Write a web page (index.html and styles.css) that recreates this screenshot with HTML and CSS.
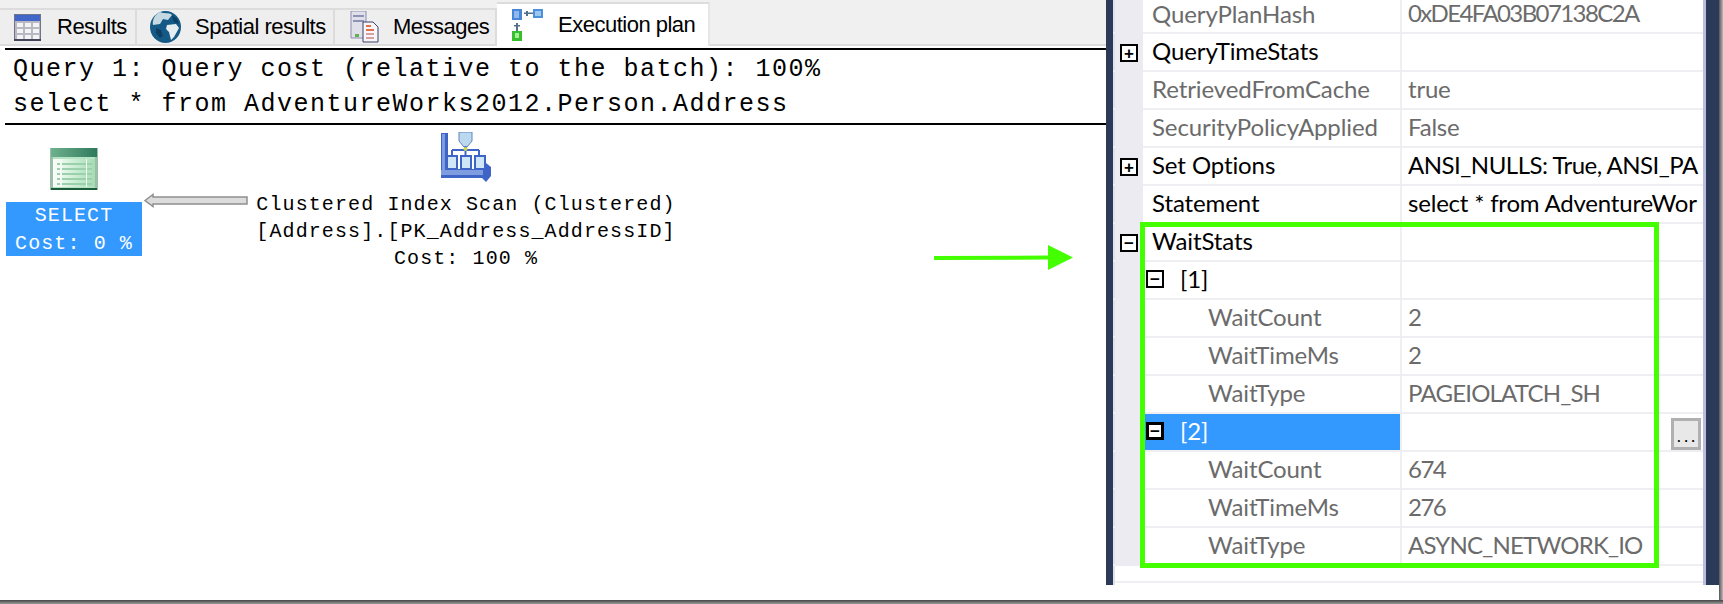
FILE: index.html
```html
<!DOCTYPE html>
<html lang="en">
<head>
    <meta charset="UTF-8">
    <title>Execution plan</title>
    <link rel="stylesheet" href="styles.css">
</head>
<body>
<div class="window">
    <div class="plan-pane">
        <div class="tabs">
            <div class="tab tab-results">
                <svg class="tab-icon" width="27" height="27" viewBox="0 0 27 27">
                    <rect x="0.5" y="0.5" width="26" height="26" fill="#b9b9c4" stroke="#6f7488"/>
                    <rect x="1" y="1" width="25" height="6" fill="#3f66c8"/>
                    <path d="M3 9h6v4H3zM11 9h6v4h-6zM19 9h6v4h-6zM3 15h6v4H3zM11 15h6v4h-6zM19 15h6v4h-6zM3 21h6v4H3zM11 21h6v4h-6zM19 21h6v4h-6z" fill="#f4f4f6"/>
                    <rect x="0" y="25" width="27" height="2" fill="#44465a"/>
                </svg>
                <span>Results</span>
            </div>
            <div class="tab tab-spatial">
                <svg class="tab-icon" width="31" height="32" viewBox="0 0 31 32">
                    <ellipse cx="15.5" cy="16" rx="15.5" ry="16" fill="#155a86"/>
                    <path d="M10 1c4 2 9 0 12 3l-4 5-5-1-3 5-7 1C2 9 5 3 10 1z" fill="#c4d9e2"/>
                    <path d="M17 14l9-1 3 4-5 9-3 3-2-8-3-3z" fill="#e6edf0"/>
                    <path d="M6 17l5 2 2 6-3 2-4-5z" fill="#0d3f63"/>
                    <path d="M22 4l5 4 2 5-5-2z" fill="#0d3f63"/>
                </svg>
                <span>Spatial results</span>
            </div>
            <div class="tab tab-messages">
                <svg class="tab-icon" width="29" height="32" viewBox="0 0 29 32">
                    <path d="M1 0h15v27H1z" fill="#dfe0ea" stroke="#8a8db0"/>
                    <rect x="3" y="4" width="11" height="2" fill="#8e92b4"/>
                    <rect x="3" y="9" width="11" height="2" fill="#8e92b4"/>
                    <rect x="5" y="23" width="4" height="3" fill="#62b04c"/>
                    <path d="M13 11h10l5 5v15H13z" fill="#f6f6fa" stroke="#3a4066"/>
                    <path d="M16 14h5v2h-5zM16 18h8v2h-8z" fill="#e2714a"/>
                    <path d="M16 22h8v2h-8zM16 26h8v2h-8z" fill="#d9a0a0"/>
                </svg>
                <span>Messages</span>
            </div>
            <div class="tab tab-active">
                <svg class="tab-icon" width="31" height="32" viewBox="0 0 31 32">
                    <rect x="0" y="0" width="10" height="11" fill="#4a86d8"/>
                    <rect x="2" y="2" width="5" height="7" fill="#8fb8ec"/>
                    <rect x="21" y="0" width="10" height="9" fill="#4a90dc"/>
                    <rect x="23" y="2" width="6" height="5" fill="#9cc6ee"/>
                    <path d="M12 3.500h9v1.500h-9zM14 2h2v5h-2z" fill="#55708a"/>
                    <path d="M4 14h2v8H4zM2 16h6v1.500H2z" fill="#55708a"/>
                    <rect x="0" y="22" width="10" height="10" fill="#35c02c"/>
                    <rect x="3" y="24" width="4" height="5" fill="#a6ef98"/>
                </svg>
                <span>Execution plan</span>
            </div>
            <div class="tab-rest"></div>
        </div>
        <div class="query-text">
            <div>Query 1: Query cost (relative to the batch): 100%</div>
            <div>select * from AdventureWorks2012.Person.Address</div>
        </div>
        <div class="plan">
            <div class="node node-select">
                <svg width="48" height="42" viewBox="0 0 48 42">
                    <defs>
                        <linearGradient id="sheet" x1="0" x2="1" y1="0" y2="0">
                            <stop offset="0" stop-color="#ffffff"/>
                            <stop offset="0.5" stop-color="#cdeed5"/>
                            <stop offset="1" stop-color="#a5dcb4"/>
                        </linearGradient>
                        <linearGradient id="sheet-top" x1="0" x2="1" y1="0" y2="0">
                            <stop offset="0" stop-color="#6fb08e"/>
                            <stop offset="1" stop-color="#2f7a5c"/>
                        </linearGradient>
                    </defs>
                    <rect width="48" height="42" fill="#9bbfa8"/>
                    <rect x="1" y="0" width="46" height="9" fill="url(#sheet-top)"/>
                    <rect x="3" y="9" width="42" height="31" fill="#b6e4c2"/>
                    <rect x="3" y="11" width="42" height="28" fill="url(#sheet)"/>
                    <path d="M6 15h36v2H6zM6 20h36v2H6zM6 25h36v2H6zM6 30h36v2H6zM6 35h36v2H6z" fill="#9ccfac"/>
                    <path d="M4 11h3v28H4zM10 11h2v28h-2zM36 11h1v28h-1z" fill="#f4fbf5"/>
                    <rect x="1" y="40" width="46" height="2" fill="#1d5c3a"/>
                </svg>
                <div class="node-label selected">SELECT<br>Cost: 0 %</div>
            </div>
            <svg class="plan-arrow" width="104" height="15" viewBox="0 0 104 15">
                <path d="M1 7.500L9 1.500V4H103V11H9V13.500Z" fill="#dcdcdc" stroke="#8f8f8f" stroke-width="1.500"/>
            </svg>
            <div class="node node-scan">
                <svg width="50" height="50" viewBox="0 0 50 50">
                    <path d="M0 1h7v36h38v-6l5 4v9l-5 6-4-4H0z" fill="#3f64c8"/>
                    <path d="M0 38h42v5H0z" fill="#7f9ce0"/>
                    <path d="M1 2h3v36H1z" fill="#7f9ce0"/>
                    <path d="M18 0h13v9l-5 6h-3l-5-6z" fill="#bcd8ee" stroke="#5f86c0"/>
                    <path d="M11 18h27M11 18v6M24.500 14v10M38 18v6" stroke="#3f64c8" stroke-width="2" fill="none"/>
                    <circle cx="24.500" cy="17" r="2" fill="#c8d84a"/>
                    <path d="M5 23h12v15H5zM19 23h12v15H19zM33 23h12v15H33z" fill="#3f64c8"/>
                    <path d="M7 25h8v11H7zM21 25h8v11h-8zM35 25h8v11h-8z" fill="#cfe6f6"/>
                </svg>
                <div class="node-label">Clustered Index Scan (Clustered)<br>[Address].[PK_Address_AddressID]<br>Cost: 100 %</div>
            </div>
        </div>
    </div>

    <div class="props">
        <div class="prop prop-first dim"><div class="gutter"></div><div class="prop-name">QueryPlanHash</div><div class="prop-value hex">0xDE4FA03B07138C2A</div></div>
        <div class="prop"><div class="gutter"><span class="toggle">+</span></div><div class="prop-name">QueryTimeStats</div><div class="prop-value"></div></div>
        <div class="prop dim"><div class="gutter"></div><div class="prop-name">RetrievedFromCache</div><div class="prop-value">true</div></div>
        <div class="prop dim"><div class="gutter"></div><div class="prop-name">SecurityPolicyApplied</div><div class="prop-value">False</div></div>
        <div class="prop"><div class="gutter"><span class="toggle">+</span></div><div class="prop-name">Set Options</div><div class="prop-value opts">ANSI_NULLS: True, ANSI_PA</div></div>
        <div class="prop"><div class="gutter"></div><div class="prop-name">Statement</div><div class="prop-value">select * from AdventureWor</div></div>
        <div class="prop"><div class="gutter"><span class="toggle">&minus;</span></div><div class="prop-name">WaitStats</div><div class="prop-value"></div></div>
        <div class="prop"><div class="gutter"></div><div class="prop-name level-1"><span class="toggle">&minus;</span>[1]</div><div class="prop-value"></div></div>
        <div class="prop dim"><div class="gutter"></div><div class="prop-name level-2">WaitCount</div><div class="prop-value">2</div></div>
        <div class="prop dim"><div class="gutter"></div><div class="prop-name level-2">WaitTimeMs</div><div class="prop-value">2</div></div>
        <div class="prop dim"><div class="gutter"></div><div class="prop-name level-2">WaitType</div><div class="prop-value caps">PAGEIOLATCH_SH</div></div>
        <div class="prop prop-selected"><div class="gutter"></div><div class="prop-name level-1"><span class="toggle">&minus;</span>[2]</div><div class="prop-value"><button class="dots">...</button></div></div>
        <div class="prop dim"><div class="gutter"></div><div class="prop-name level-2">WaitCount</div><div class="prop-value num">674</div></div>
        <div class="prop dim"><div class="gutter"></div><div class="prop-name level-2">WaitTimeMs</div><div class="prop-value num">276</div></div>
        <div class="prop dim"><div class="gutter"></div><div class="prop-name level-2">WaitType</div><div class="prop-value caps">ASYNC_NETWORK_IO</div></div>
        <div class="prop-empty"></div>
    </div>
</div>

<!-- annotations drawn on top of the screenshot -->
<svg class="callout-arrow" width="140" height="26" viewBox="0 0 140 26">
    <path d="M0 11L114 10.500V0L139 12.500L114 25V14.500L0 15Z" fill="#44ff00"/>
</svg>
<div class="callout-box"></div>
</body>
</html>
```

FILE: styles.css
```css
html, body {
    margin: 0;
    padding: 0;
}

body {
    position: relative;
    width: 1723px;
    height: 604px;
    overflow: hidden;
    background: #fff;
    font-family: 'Liberation Sans', Arial, sans-serif;
    color: #000;
}

.window {
    display: flex;
    height: 585px;
    width: 1719px;
}

/* left side */
.plan-pane {
    width: 1106px;
    flex: none;
}

.tabs {
    display: flex;
    align-items: flex-end;
    height: 46px;
    background: #f0f0f0;
    font-size: 22px;
}

.tab {
    display: flex;
    align-items: center;
    height: 38px;
    box-sizing: border-box;
    background: #eeeeee;
    border-top: 2px solid #dcdcdc;
    border-right: 2px solid #dcdcdc;
    border-bottom: 2px solid #dcdcdc;
    letter-spacing: -0.5px;
}

.tab-results { width: 137px; padding-left: 14px; }
.tab-spatial { width: 198px; padding-left: 13px; }
.tab-messages { width: 162px; padding-left: 15px; }
.tab-results .tab-icon { margin-right: 16px; }
.tab-spatial .tab-icon { margin-right: 14px; }
.tab-messages .tab-icon { margin-right: 14px; }

.tab-active {
    width: 213px;
    height: 44px;
    padding-left: 15px;
    background: #fff;
    border-bottom: none;
    border-right-color: #e6e6e6;
}

.tab-active .tab-icon {
    margin-right: 15px;
}

.tab-rest {
    flex: 1;
    height: 2px;
    background: #dcdcdc;
}

.query-text {
    margin: 2px 0 0 5px;
    padding: 0 0 0 8px;
    height: 73px;
    border-top: 2px solid #000;
    border-bottom: 2px solid #000;
    font-family: 'Liberation Mono', 'Courier New', monospace;
    font-size: 25px;
    letter-spacing: 1.5px;
    line-height: 35px;
    white-space: nowrap;
}

.query-text > div:first-child {
    margin-top: 2px;
}

.plan {
    position: relative;
    height: 460px;
    font-family: 'Liberation Mono', 'Courier New', monospace;
    font-size: 20px;
    letter-spacing: 1.100px;
    line-height: 27px;
}

.node {
    position: absolute;
    display: flex;
    flex-direction: column;
    align-items: center;
    text-align: center;
    white-space: nowrap;
}

.node-select {
    left: 6px;
    top: 23px;
    width: 136px;
}

.node-select svg {
    margin-bottom: 12px;
}

.node-scan {
    left: 256px;
    top: 7px;
    width: 420px;
}

.node-scan svg {
    margin-bottom: 9px;
}

.node-label.selected {
    width: 136px;
    height: 54px;
    background: #3399ff;
    color: #fff;
    line-height: 28px;
}

.plan-arrow {
    position: absolute;
    left: 144px;
    top: 68px;
}

/* right side, properties grid */
.props {
    flex: 1;
    min-width: 0;
    display: flex;
    flex-direction: column;
    box-sizing: border-box;
    border-left: 7px solid #2b3a58;
    border-right: 13px solid #2b3a58;
    box-shadow: inset 2px 0 0 #dfe0ec, inset -3px 0 0 #b8bedb;
    padding-right: 3px;
    font-family: 'Lato', 'Liberation Sans', sans-serif;
    font-size: 24px;
    letter-spacing: -0.1px;
}

.prop {
    display: flex;
    flex: none;
    height: 38px;
    box-sizing: border-box;
    border-bottom: 2px solid #eeeef3;
    line-height: 33px;
    white-space: nowrap;
}

.prop-first {
    height: 34px;
    line-height: 25px;
}

.gutter {
    flex: none;
    width: 28px;
    margin-bottom: -2px;
    margin-left: 2px;
    background: #ecebf2;
    display: flex;
    align-items: center;
    justify-content: center;
}

.prop-name {
    flex: none;
    width: 248px;
    padding-left: 9px;
    padding-bottom: 2px;
    border-right: 2px solid #eeeef3;
    display: flex;
    align-items: center;
    line-height: 30px;
    height: 34px;
}

.prop-first .prop-name {
    height: 28px;
    padding-bottom: 4px;
}

.prop-value {
    position: relative;
    flex: 1;
    min-width: 0;
    padding-left: 6px;
    overflow: hidden;
    letter-spacing: -0.2px;
}

.prop-first .prop-value {
    overflow: visible;
}

.prop-value.hex {
    letter-spacing: -1.6px;
}

.prop-value.caps {
    letter-spacing: -0.8px;
}

.prop-value.opts {
    letter-spacing: -0.5px;
}

.prop-value.num {
    letter-spacing: -1.5px;
}

.level-1 {
    width: 254px;
    padding-left: 3px;
}

.level-2 {
    padding-left: 65px;
    width: 192px;
}

.dim .prop-name, .dim .prop-value {
    color: #6b6b6b;
}

.toggle {
    flex: none;
    display: flex;
    align-items: center;
    justify-content: center;
    width: 18px;
    height: 18px;
    box-sizing: border-box;
    border: 2px solid #000;
    background: #fff;
    color: #000;
    font-family: 'Liberation Sans', sans-serif;
    font-size: 17px;
    font-weight: bold;
    letter-spacing: 0;
    line-height: 1;
}

.level-1 .toggle {
    margin-right: 16px;
}

.prop-selected .prop-name {
    background: #3399ff;
    color: #fff;
}

.prop-selected .toggle {
    border-width: 3px;
}

.dots {
    position: absolute;
    right: 2px;
    top: 4px;
    width: 30px;
    height: 32px;
    padding: 10px 0 0;
    box-sizing: border-box;
    border: 3px solid #b0b0b0;
    outline: none;
    background: #e8e8e8;
    color: #000;
    font-family: 'Liberation Mono', monospace;
    font-size: 12px;
    font-weight: bold;
    line-height: 1;
    letter-spacing: 0;
}

.prop-empty {
    height: 15px;
    margin-left: 2px;
    border-bottom: 2px solid #eeeef3;
}

/* annotations */
.callout-arrow {
    position: absolute;
    left: 934px;
    top: 245px;
}

.callout-box {
    position: absolute;
    left: 1140px;
    top: 222px;
    width: 519px;
    height: 346px;
    box-sizing: border-box;
    border: 5px solid #44ff00;
}

/* drop shadow along the bottom and right of the picture */
body::before {
    content: '';
    position: absolute;
    left: 1719px;
    top: 0;
    width: 4px;
    height: 604px;
    background: linear-gradient(to right, #555, #bbb);
}

body::after {
    content: '';
    position: absolute;
    left: 0;
    top: 600px;
    width: 1723px;
    height: 4px;
    background: linear-gradient(#444, #999);
}
```
